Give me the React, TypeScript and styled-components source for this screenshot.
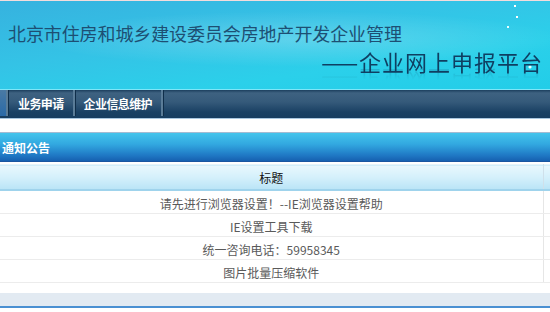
import React from 'react'
import styled, { createGlobalStyle } from 'styled-components'

const GlobalStyle = createGlobalStyle`
  html, body {
    margin: 0;
    padding: 0;
    background: #ffffff;
    overflow: hidden;
  }
  body {
    font-family: "Noto Sans CJK SC", "Noto Sans", sans-serif;
    font-size: 12px;
  }
`

const notices = [
  '请先进行浏览器设置！--IE浏览器设置帮助',
  'IE设置工具下载',
  '统一咨询电话：59958345',
  '图片批量压缩软件',
]

const App = () => {
  return (
    <Page>
      <GlobalStyle />
      <Header>
        <Title>北京市住房和城乡建设委员会房地产开发企业管理</Title>
        <Slogan>——企业网上申报平台</Slogan>
      </Header>
      <Nav>
        <NavItem $active />
        <NavItem>业务申请</NavItem>
        <NavItem>企业信息维护</NavItem>
      </Nav>
      <Spacer />
      <SectionBar>通知公告</SectionBar>
      <Table>
        <colgroup>
          <col style={{ width: 543 }} />
          <col style={{ width: 20 }} />
        </colgroup>
        <thead>
          <tr>
            <Th>标题</Th>
            <Th />
          </tr>
        </thead>
        <tbody>
          {notices.map((n) => (
            <tr key={n}>
              <Td>{n}</Td>
              <Td />
            </tr>
          ))}
        </tbody>
      </Table>
      <Footer />
    </Page>
  )
}

const Page = styled.div`
  width: 563px;
`

const Header = styled.div`
  height: 89px;
  border-top: 1px solid #f3dcdc;
  box-sizing: border-box;
  padding: 20px 0 0 8px;
  display: flex;
  flex-direction: column;
  width: 550px;
  background:
    radial-gradient(1.5px 1.5px at 515px 5px, #ffffff 50%, transparent 100%),
    radial-gradient(1.5px 1.5px at 517px 16px, #ffffff 50%, transparent 100%),
    radial-gradient(1.5px 1.5px at 508px 26px, #e8ffff 50%, transparent 100%),
    radial-gradient(2px 2px at 530px 66px, #e8ffff 50%, transparent 100%),
    radial-gradient(ellipse 380px 40px at 300px 38px, rgba(255, 255, 255, 0.22), transparent 70%),
    linear-gradient(172deg, #36b2df 0%, #34c3e6 40%, #2bd0ea 70%, #22cde8 100%);
`

const Title = styled.div`
  font-size: 18px;
  line-height: 24px;
  color: #1d4f73;
  letter-spacing: -0.1px;
`

const Slogan = styled.div`
  align-self: flex-end;
  margin-top: 2px;
  margin-right: 7px;
  font-size: 22px;
  line-height: 28px;
  letter-spacing: 1px;
  color: #0f3f62;
  -webkit-box-reflect: below -8px linear-gradient(transparent 55%, rgba(255, 255, 255, 0.25));
`

const Nav = styled.div`
  height: 26px;
  display: flex;
  align-items: stretch;
  border-top: 1px solid #7fe6f8;
  background: linear-gradient(180deg, #1c3f5e 0px, #3e6281 3px, #355a7a 12px, #1a4164 22px, #173d60 100%);
  padding-bottom: 2px;
  border-bottom: 1px solid #a9c7e0;
`

const NavItem = styled.div<{ $active?: boolean }>`
  display: flex;
  align-items: center;
  padding: ${(p) => (p.$active ? '0' : '1px 9px 0 9px')};
  width: ${(p) => (p.$active ? '6px' : 'auto')};
  margin-right: ${(p) => (p.$active ? '1px' : '0')};
  color: #ffffff;
  font-weight: bold;
  font-size: 12px;
  letter-spacing: -0.6px;
  background: ${(p) => (p.$active ? 'linear-gradient(180deg, #4a7aa4, #2a6aa8)' : 'transparent')};
  border-right: 2px solid #5a7c98;
  box-shadow: 1px 0 0 #0f2e4a;
`

const Spacer = styled.div`
  height: 13px;
`

const SectionBar = styled.div`
  height: 30px;
  box-sizing: border-box;
  border-top: 1px solid #a4bbd2;
  border-bottom: 1px solid #1a55a0;
  display: flex;
  align-items: center;
  padding-left: 2px;
  color: #ffffff;
  font-weight: bold;
  font-size: 12px;
  background: linear-gradient(180deg, #44c4ec 0%, #32a8e0 40%, #1f78c4 80%, #1660b0 100%);
`

const Table = styled.table`
  border-collapse: collapse;
  table-layout: fixed;
  width: 563px;
  margin-top: 2px;
  border-top: 1px solid #e6f3fa;
`

const Th = styled.th`
  height: 23px;
  padding: 1px 0 0 0;
  font-weight: normal;
  font-size: 12px;
  color: #111111;
  text-align: center;
  background: linear-gradient(180deg, #e8f7fd 0%, #d4f0fb 50%, #b9e4f6 100%);
  border-bottom: 2px solid #9fd3ec;
  border-right: 1px solid #cfe0ea;
`

const Td = styled.td`
  height: 20px;
  padding: 2px 0 0 0;
  font-size: 12px;
  color: #5a5a5a;
  text-align: center;
  background: #ffffff;
  border-bottom: 1px solid #ececec;
  border-right: 1px solid #e6e6e6;
`

const Footer = styled.div`
  margin-top: 10px;
  height: 13px;
  background: #e2eaf2;
  border-bottom: 2px solid #4a90d2;
`

export default App
